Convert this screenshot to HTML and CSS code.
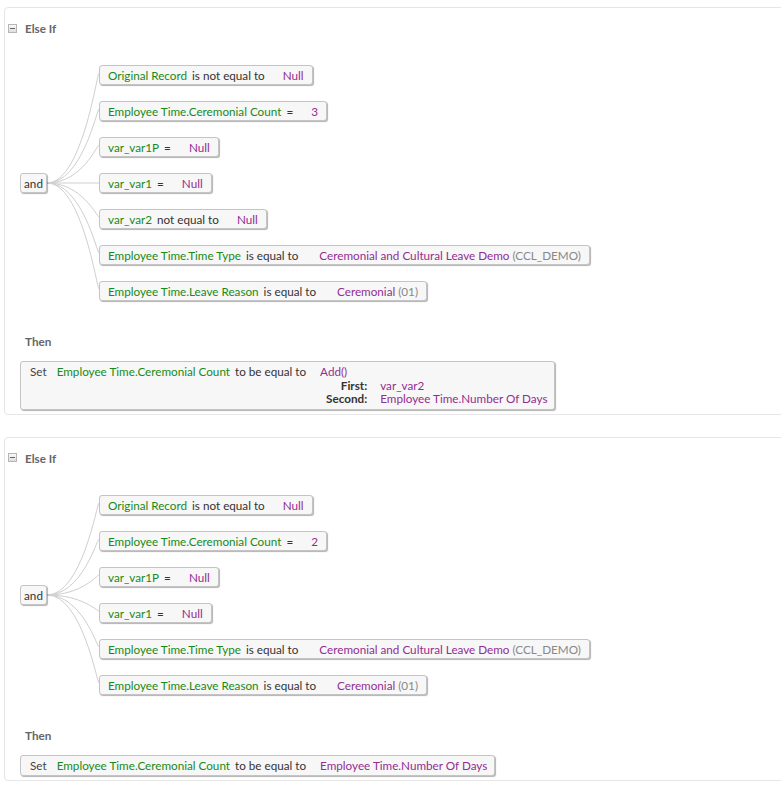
FILE: index.html
```html
<!DOCTYPE html>
<html lang="en">
<head>
  <meta charset="UTF-8" />
  <title>Business Rule - Else If</title>
  <link rel="stylesheet" href="styles.css">
</head>
<body>
  <div class="rule">
    <div class="rule-head"><span class="toggle"></span>Else If</div>
    <div class="cond-group">
      <svg class="links" width="100" height="236">
        <path d="M42,118 C77,118 92,8 94,8" />
        <path d="M42,118 C77,118 92,44 94,44" />
        <path d="M42,118 C77,118 92,80 94,80" />
        <path d="M42,118 L94,118" />
        <path d="M42,118 C77,118 92,152 94,152" />
        <path d="M42,118 C77,118 92,188 94,188" />
        <path d="M42,118 C77,118 92,224 94,224" />
      </svg>
      <div class="op-box">and</div>
      <div class="cond-list">
        <div class="cond"><span class="fld">Original Record</span><span class="opr">is not equal to</span><span class="val">Null</span></div>
        <div class="cond"><span class="fld">Employee Time.Ceremonial Count</span><span class="opr">=</span><span class="val">3</span></div>
        <div class="cond"><span class="fld">var_var1P</span><span class="opr">=</span><span class="val">Null</span></div>
        <div class="cond"><span class="fld">var_var1</span><span class="opr">=</span><span class="val">Null</span></div>
        <div class="cond"><span class="fld">var_var2</span><span class="opr">not equal to</span><span class="val">Null</span></div>
        <div class="cond"><span class="fld">Employee Time.Time Type</span><span class="opr">is equal to</span><span class="val wide">Ceremonial and Cultural Leave Demo <span class="code">(CCL_DEMO)</span></span></div>
        <div class="cond"><span class="fld">Employee Time.Leave Reason</span><span class="opr">is equal to</span><span class="val wide">Ceremonial <span class="code">(01)</span></span></div>
      </div>
    </div>
    <div class="then-label">Then</div>
    <div class="action">
      <span class="kw">Set</span><span class="fld">Employee Time.Ceremonial Count</span><span class="opr">to be equal to</span>
      <div class="func">
        <div class="val">Add()</div>
        <div class="params">
          <span class="plabel">First:</span><span class="val">var_var2</span>
          <span class="plabel">Second:</span><span class="val">Employee Time.Number Of Days</span>
        </div>
      </div>
    </div>
  </div>

  <div class="rule">
    <div class="rule-head"><span class="toggle"></span>Else If</div>
    <div class="cond-group">
      <svg class="links" width="100" height="200">
        <path d="M42,100 C77,100 92,8 94,8" />
        <path d="M42,100 C77,100 92,44 94,44" />
        <path d="M42,100 C77,100 92,80 94,80" />
        <path d="M42,100 C77,100 92,116 94,116" />
        <path d="M42,100 C77,100 92,152 94,152" />
        <path d="M42,100 C77,100 92,188 94,188" />
      </svg>
      <div class="op-box">and</div>
      <div class="cond-list">
        <div class="cond"><span class="fld">Original Record</span><span class="opr">is not equal to</span><span class="val">Null</span></div>
        <div class="cond"><span class="fld">Employee Time.Ceremonial Count</span><span class="opr">=</span><span class="val">2</span></div>
        <div class="cond"><span class="fld">var_var1P</span><span class="opr">=</span><span class="val">Null</span></div>
        <div class="cond"><span class="fld">var_var1</span><span class="opr">=</span><span class="val">Null</span></div>
        <div class="cond"><span class="fld">Employee Time.Time Type</span><span class="opr">is equal to</span><span class="val wide">Ceremonial and Cultural Leave Demo <span class="code">(CCL_DEMO)</span></span></div>
        <div class="cond"><span class="fld">Employee Time.Leave Reason</span><span class="opr">is equal to</span><span class="val wide">Ceremonial <span class="code">(01)</span></span></div>
      </div>
    </div>
    <div class="then-label">Then</div>
    <div class="action">
      <span class="kw">Set</span><span class="fld">Employee Time.Ceremonial Count</span><span class="opr">to be equal to</span>
      <div class="func">
        <div class="val">Employee Time.Number Of Days</div>
      </div>
    </div>
  </div>
</body>
</html>
```

FILE: styles.css
```css
html, body {
  margin: 0;
  padding: 0;
  background: #ffffff;
  overflow: hidden;
}
body {
  padding: 7px 0 0 4px;
  font-family: Lato, "Liberation Sans", sans-serif;
  font-size: 11.7px;
  color: #333;
}
.rule {
  border: 1px solid #e6e6e6;
  border-radius: 4px;
  margin-right: -20px;
  margin-bottom: 22px;
  padding-bottom: 4px;
}
.rule-head {
  margin-top: 10px;
  height: 20px;
  line-height: 20px;
  padding-left: 3px;
  font-weight: bold;
  color: #666;
  display: flex;
  align-items: center;
}
.toggle {
  width: 7px;
  height: 7px;
  border: 1px solid #b5b5b5;
  background: linear-gradient(#fafafa, #dedede);
  margin-right: 8px;
  position: relative;
}
.toggle::after {
  content: "";
  position: absolute;
  left: 1px;
  right: 1px;
  top: 3px;
  height: 1px;
  background: #666;
}
.cond-group {
  position: relative;
  margin-top: 27px;
  padding-left: 15px;
  display: flex;
  align-items: center;
}
.links {
  position: absolute;
  left: 0;
  top: 0;
}
.links path {
  fill: none;
  stroke: #cfcfcf;
  stroke-width: 1;
}
.op-box, .cond, .action {
  position: relative;
  background: #f7f7f7;
  border: 1px solid #c4c4c4;
  border-radius: 3px;
  box-shadow: 1px 1px 1px rgba(0, 0, 0, 0.3);
}
.op-box {
  width: 25px;
  height: 18px;
  line-height: 18px;
  text-align: center;
  color: #333;
}
.cond-list {
  margin-left: 52px;
  display: flex;
  flex-direction: column;
  align-items: flex-start;
  gap: 16px;
}
.cond {
  display: flex;
  height: 18px;
  line-height: 18px;
  padding: 0 8px;
  white-space: nowrap;
}
.fld {
  color: #188a18;
}
.opr {
  margin-left: 5px;
  color: #333;
}
.val {
  color: #932d93;
}
.cond .val {
  margin-left: 18px;
}
.cond .val.wide {
  margin-left: 21px;
}
.code {
  color: #888;
}
.then-label {
  margin-top: 30px;
  padding-left: 20px;
  height: 20px;
  line-height: 20px;
  font-weight: bold;
  color: #666;
}
.action {
  display: inline-flex;
  align-items: flex-start;
  margin: 10px 0 0 15px;
  padding: 3px 7px 3px 9px;
  line-height: 13.5px;
  white-space: nowrap;
}
.kw {
  color: #444;
  margin-right: 10px;
}
.func {
  margin-left: 14px;
}
.params {
  display: grid;
  grid-template-columns: auto auto;
  column-gap: 13px;
  margin-left: 6px;
}
.plabel {
  text-align: right;
  font-weight: bold;
  color: #333;
}
```
